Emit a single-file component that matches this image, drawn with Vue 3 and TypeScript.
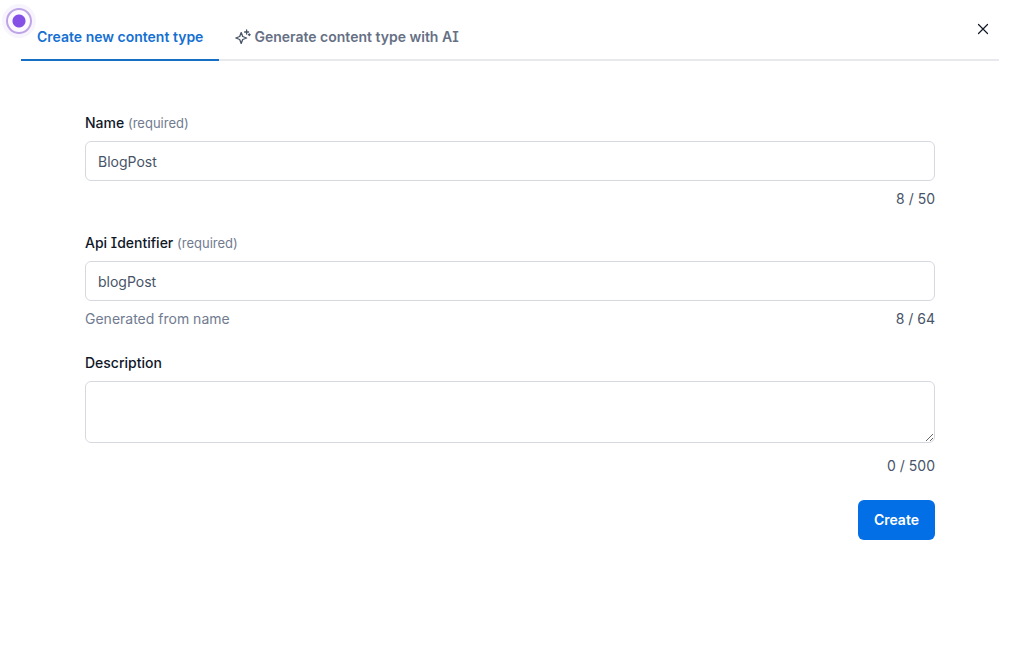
<script setup lang="ts">
import { computed, ref } from 'vue'

const name = ref('BlogPost')
const identifier = ref('blogPost')
const description = ref('')

const nameCount = computed(() => `${name.value.length} / 50`)
const identifierCount = computed(() => `${identifier.value.length} / 64`)
const descriptionCount = computed(() => `${description.value.length} / 500`)
</script>

<template>
  <main class="dialog">
    <span class="beacon" aria-hidden="true"></span>
    <header class="header">
      <div class="tabs" role="tablist">
        <button class="tab active" type="button" role="tab" aria-selected="true">Create new content type</button>
        <button class="tab" type="button" role="tab" aria-selected="false">
          <svg class="sparkle" viewBox="0 0 16 16" aria-hidden="true">
            <path d="M6.2 3.6 7.7 7.5 11.6 9 7.7 10.5 6.2 14.4 4.7 10.5 0.8 9 4.7 7.5Z" />
            <path d="M11.6 1v4M9.6 3h4" />
            <path d="M14.3 4.8v1.8M13.4 5.7h1.8" />
          </svg>
          Generate content type with AI
        </button>
      </div>
      <button class="close" type="button" aria-label="Close">
        <svg viewBox="0 0 12 12" aria-hidden="true"><path d="M1.5 1.5l9 9M10.5 1.5l-9 9" /></svg>
      </button>
    </header>

    <form class="form" @submit.prevent>
      <div class="field">
        <label for="name">Name <span class="required">(required)</span></label>
        <input id="name" v-model="name" type="text" maxlength="50" required />
        <div class="help"><span class="count">{{ nameCount }}</span></div>
      </div>
      <div class="field">
        <label for="identifier">Api Identifier <span class="required">(required)</span></label>
        <input id="identifier" v-model="identifier" type="text" maxlength="64" required />
        <div class="help">
          <span class="hint">Generated from name</span>
          <span class="count">{{ identifierCount }}</span>
        </div>
      </div>
      <div class="field">
        <label for="description">Description</label>
        <textarea id="description" v-model="description" maxlength="500"></textarea>
        <div class="help below-area"><span class="count">{{ descriptionCount }}</span></div>
      </div>
      <button class="create" type="submit">Create</button>
    </form>
  </main>
</template>

<style>
body {
  background: #fff;
}
</style>

<style scoped>
.dialog {
  position: relative;
  box-sizing: border-box;
  padding: 13px 23px 24px 21px;
  font-family: Inter, "Liberation Sans", sans-serif;
  font-size: 14px;
  font-feature-settings: "cv08";
  line-height: 20px;
  color: #101828;
}

.dialog * {
  box-sizing: border-box;
}

button,
input,
textarea {
  margin: 0;
  font: inherit;
  font-feature-settings: inherit;
}

.beacon {
  position: absolute;
  top: 8px;
  left: 6px;
  width: 26px;
  height: 26px;
  border: 2px solid #bda4e6;
  border-radius: 50%;
  background: radial-gradient(circle, #8450e6 6px, #fcfaff 7px);
  box-shadow: 0 0 0 4px #f8f4fd;
}

.header {
  display: flex;
  align-items: flex-start;
  justify-content: space-between;
  border-bottom: 2px solid #e7e9ec;
}

.tabs {
  display: flex;
  margin-bottom: -2px;
}

.tab {
  display: flex;
  align-items: center;
  gap: 3px;
  height: 48px;
  padding: 2px 16px 0;
  border: 0;
  border-bottom: 2px solid transparent;
  background: none;
  color: #667085;
  font-weight: 600;
  white-space: nowrap;
}

.tab.active {
  border-bottom-color: #1570c4;
  color: #1570d1;
}

.sparkle {
  width: 16px;
  height: 16px;
  fill: none;
  stroke: #475467;
  stroke-width: 1.3;
  stroke-linecap: round;
  stroke-linejoin: round;
}

.close {
  display: grid;
  place-items: center;
  width: 32px;
  height: 32px;
  padding: 0;
  border: 0;
  background: none;
}

.close svg {
  width: 12px;
  height: 12px;
  fill: none;
  stroke: #101828;
  stroke-width: 1.2;
  stroke-linecap: round;
}

.form {
  display: flex;
  flex-direction: column;
  gap: 24px;
  padding: 52px 64px 0;
}

.field {
  display: flex;
  flex-direction: column;
  gap: 8px;
}

label {
  font-weight: 500;
}

.hint,
.required {
  color: #717b90;
  font-weight: 400;
}

.required {
  font-size: 13px;
}

input,
textarea {
  display: block;
  width: 100%;
  padding: 8px 12px;
  border: 1px solid #d5d9df;
  border-radius: 6px;
  outline: none;
  background: #fff;
  color: #475467;
}

input {
  height: 40px;
}

textarea {
  height: 62px;
  resize: vertical;
}

.help {
  display: flex;
  min-height: 20px;
}

.below-area {
  margin-top: 5px;
}

.count {
  margin-left: auto;
  color: #475467;
}

.create {
  align-self: flex-end;
  height: 40px;
  padding: 0 16px;
  border: 0;
  border-radius: 6px;
  background: #026fe6;
  color: #fff;
  font-weight: 600;
}
</style>
